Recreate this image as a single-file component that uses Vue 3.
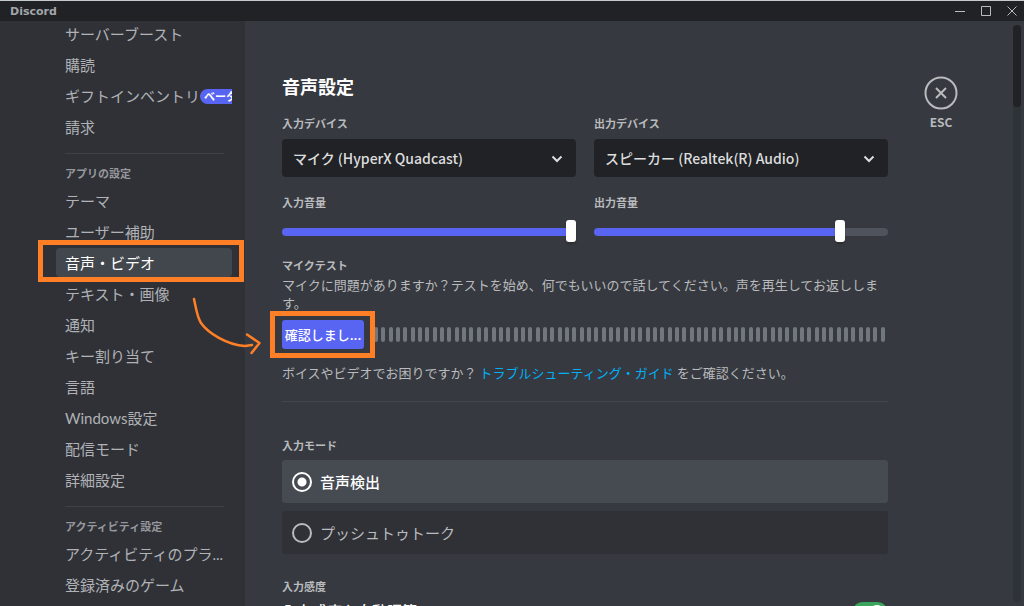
<script setup>
import { ref, computed } from 'vue'

const topItems = [
  { label: 'サーバーブースト' },
  { label: '購読' },
  { label: 'ギフトインベントリ', badge: 'ベータ' },
  { label: '請求' },
]
const appItems = [
  'テーマ',
  'ユーザー補助',
  '音声・ビデオ',
  'テキスト・画像',
  '通知',
  'キー割り当て',
  '言語',
  'Windows設定',
  '配信モード',
  '詳細設定',
]
const activityItems = ['アクティビティのプラ...', '登録済みのゲーム']
const current = ref('音声・ビデオ')

const inputVolume = ref(100)
const outputVolume = ref(85)
const inputFill = computed(() => ({ '--fill': inputVolume.value + '%' }))
const outputFill = computed(() => ({ '--fill': outputVolume.value + '%' }))
const mode = ref('voice')
const auto = ref(true)
</script>

<template>
  <div class="window">
    <header class="titlebar">
      <span class="brand">Discord</span>
      <div class="controls">
        <button type="button" aria-label="最小化">
          <svg width="12" height="12" viewBox="0 0 12 12"><path d="M1 6.5h10" /></svg>
        </button>
        <button type="button" aria-label="最大化">
          <svg width="12" height="12" viewBox="0 0 12 12"><path d="M1.5 1.5h9v9h-9z" /></svg>
        </button>
        <button type="button" aria-label="ウィンドウを閉じる">
          <svg width="12" height="12" viewBox="0 0 12 12"><path d="M1.5 1.5l9 9M10.5 1.5l-9 9" /></svg>
        </button>
      </div>
    </header>

    <div class="body">
      <nav class="sidebar">
        <ul class="first">
          <li v-for="item in topItems" :key="item.label">
            <a href="#" class="item" @click.prevent>
              {{ item.label }}<span v-if="item.badge" class="badge">{{ item.badge }}</span>
            </a>
          </li>
        </ul>
        <hr />
        <h2>アプリの設定</h2>
        <ul>
          <li v-for="item in appItems" :key="item">
            <a
              href="#"
              class="item"
              :class="{ active: item === current }"
              @click.prevent="current = item"
            >{{ item }}</a>
            <span v-if="item === '音声・ビデオ'" class="mark mark-item"></span>
          </li>
        </ul>
        <hr />
        <h2>アクティビティ設定</h2>
        <ul>
          <li v-for="item in activityItems" :key="item">
            <a href="#" class="item" @click.prevent>{{ item }}</a>
          </li>
        </ul>
      </nav>

      <main class="main">
        <section class="content">
          <h1>音声設定</h1>
          <div class="grid">
            <div class="field">
              <label class="label" for="in-device">入力デバイス</label>
              <div class="select">
                <select id="in-device">
                  <option>マイク (HyperX Quadcast)</option>
                </select>
                <svg width="12" height="8" viewBox="0 0 12 8"><path d="M1.5 1.5L6 6l4.5-4.5" /></svg>
              </div>
            </div>
            <div class="field">
              <label class="label" for="out-device">出力デバイス</label>
              <div class="select">
                <select id="out-device">
                  <option>スピーカー (Realtek(R) Audio)</option>
                </select>
                <svg width="12" height="8" viewBox="0 0 12 8"><path d="M1.5 1.5L6 6l4.5-4.5" /></svg>
              </div>
            </div>
            <div class="field">
              <label class="label" for="in-vol">入力音量</label>
              <input id="in-vol" v-model="inputVolume" type="range" min="0" max="100" :style="inputFill" />
            </div>
            <div class="field">
              <label class="label" for="out-vol">出力音量</label>
              <input id="out-vol" v-model="outputVolume" type="range" min="0" max="100" :style="outputFill" />
            </div>
          </div>

          <h3 class="label test-label">マイクテスト</h3>
          <p class="desc">マイクに問題がありますか？テストを始め、何でもいいので話してください。声を再生してお返しします。</p>
          <div class="test">
            <button type="button" class="check">確認しまし...</button>
            <div class="meter"><i v-for="n in 70" :key="n"></i></div>
            <span class="mark mark-button"></span>
            <svg class="arrow" width="70" height="62" viewBox="0 0 70 62">
              <path d="M3 3C5 12 6 21 10 27C17 37 36 49 54 50L61 49" />
              <path d="M56 38.5L68.5 47L60.5 57" />
            </svg>
          </div>
          <p class="help">
            ボイスやビデオでお困りですか？ <a href="#" @click.prevent>トラブルシューティング・ガイド</a> をご確認ください。
          </p>

          <fieldset class="modes">
            <legend class="label">入力モード</legend>
            <label class="mode" :class="{ on: mode === 'voice' }">
              <input v-model="mode" type="radio" name="mode" value="voice" />
              <span>音声検出</span>
            </label>
            <label class="mode" :class="{ on: mode === 'ptt' }">
              <input v-model="mode" type="radio" name="mode" value="ptt" />
              <span>プッシュトゥトーク</span>
            </label>
          </fieldset>

          <h3 class="label">入力感度</h3>
          <label class="auto">
            <span>入力感度を自動調節</span>
            <input v-model="auto" type="checkbox" role="switch" />
          </label>
        </section>

        <aside class="tools">
          <button type="button" class="close">
            <svg width="34" height="34" viewBox="0 0 34 34">
              <circle cx="17" cy="17" r="15.5" />
              <path d="M12 12l10 10M22 12L12 22" />
            </svg>
            <span>ESC</span>
          </button>
        </aside>
        <div class="scroll"><div class="thumb"></div></div>
      </main>
    </div>
  </div>
</template>

<style>
html,
body {
  margin: 0;
  background: #36393f;
  overflow: hidden;
}
</style>

<style scoped>
* {
  box-sizing: border-box;
}
.window {
  display: flex;
  flex-direction: column;
  height: 100vh;
  overflow: hidden;
  color: #b9bbbe;
  background: #36393f;
  font-family: 'Noto Sans CJK JP', sans-serif;
}
button {
  padding: 0;
  border: 0;
  background: none;
  color: inherit;
  font: inherit;
}
h1,
h2,
h3,
p,
ul,
fieldset {
  margin: 0;
  padding: 0;
  border: 0;
  list-style: none;
}
.titlebar {
  flex: none;
  display: flex;
  align-items: center;
  justify-content: space-between;
  height: 21px;
  padding: 0 6px 0 10px;
  border-top: 1px solid #c5cacd;
  background: #202225;
}
.brand {
  padding-top: 2px;
  font: bold 11px/18px 'DejaVu Sans', sans-serif;
  color: #a3a6aa;
}
.controls {
  display: flex;
  gap: 14px;
}
.controls button {
  display: flex;
}
.controls svg {
  fill: none;
  stroke: #b9bbbe;
}
.body {
  flex: 1;
  display: flex;
  min-height: 0;
}
.sidebar {
  flex: none;
  width: 245px;
  padding: 0 13px 0 56px;
  background: #2f3136;
}
.sidebar ul {
  display: flex;
  flex-direction: column;
  gap: 2px;
}
.sidebar .first {
  margin-top: -2px;
}
.sidebar li {
  position: relative;
}
.item {
  display: flex;
  align-items: center;
  height: 29px;
  padding-left: 9px;
  border-radius: 4px;
  overflow: hidden;
  white-space: nowrap;
  color: #b0b2b6;
  font-family: Lato, 'Noto Sans CJK JP', sans-serif;
  font-size: 15px;
  line-height: 20px;
  text-decoration: none;
}
.item.active {
  background: #42464d;
  color: #fff;
}
.badge {
  flex: none;
  height: 15px;
  margin-top: 2px;
  padding: 0 4px;
  border-radius: 8px;
  background: #5865f2;
  color: #fff;
  font-size: 11px;
  font-weight: 700;
  line-height: 15px;
}
.sidebar hr {
  height: 1px;
  margin: 12px 8px 11px 9px;
  border: 0;
  background: #3f4147;
}
.sidebar h2 {
  padding-left: 9px;
  color: #96989d;
  font-size: 11px;
  font-weight: 700;
  line-height: 16px;
  margin-bottom: 5px;
}
.mark {
  position: absolute;
  border: 5px solid #ff7f27;
  pointer-events: none;
}
.mark-item {
  inset: -8px -12px -5px -18px;
}
.mark-button {
  width: 105px;
  height: 47px;
  left: -12px;
  top: -9px;
}
.main {
  position: relative;
  flex: 1;
  display: flex;
  min-width: 0;
  padding: 0 3px 0 37px;
}
.content {
  flex: 1;
  min-width: 0;
  max-width: 740px;
  padding-top: 53px;
}
h1 {
  color: #fff;
  font-size: 18px;
  font-weight: 700;
  line-height: 24px;
}
.label {
  display: block;
  padding: 0;
  color: #b9bbbe;
  font-size: 11px;
  font-weight: 700;
  line-height: 16px;
}
.grid {
  display: grid;
  grid-template-columns: 1fr 1fr;
  gap: 17px 18px;
  margin-top: 17px;
}
.select {
  position: relative;
  margin-top: 8px;
}
.select select {
  display: block;
  width: 100%;
  height: 38px;
  padding: 0 32px 0 11px;
  border: 0;
  border-radius: 4px;
  appearance: none;
  background: #202225;
  color: #dcddde;
  font: 500 14px 'Noto Sans CJK JP', sans-serif;
}
.select svg {
  position: absolute;
  right: 13px;
  top: 16px;
  fill: none;
  stroke: #dcddde;
  stroke-width: 2;
  pointer-events: none;
}
input[type='range'] {
  display: block;
  width: 100%;
  height: 22px;
  margin: 11px 0 0;
  appearance: none;
  background: none;
}
input[type='range']::-webkit-slider-runnable-track {
  height: 8px;
  border-radius: 4px;
  background: linear-gradient(to right, #5865f2 var(--fill), #4f545c var(--fill));
}
input[type='range']::-webkit-slider-thumb {
  appearance: none;
  width: 10px;
  height: 22px;
  margin-top: -8px;
  border-radius: 3px;
  background: #fff;
  box-shadow: 0 2px 2px rgba(0, 0, 0, 0.2);
}
.test-label {
  margin-top: 14px;
}
.desc,
.help {
  font-size: 13px;
  line-height: 18px;
}
.desc {
  margin-top: 3px;
}
.test {
  position: relative;
  display: flex;
  align-items: center;
  gap: 10px;
  margin-top: 8px;
  padding-right: 3px;
}
.check {
  flex: none;
  width: 82px;
  height: 29px;
  border-radius: 3px;
  background: #5865f2;
  color: #fff;
  font-size: 13px;
  font-weight: 500;
}
.meter {
  flex: 1;
  display: flex;
  justify-content: space-between;
}
.meter i {
  width: 4px;
  height: 15px;
  border-radius: 2px;
  background: #72767d;
}
.arrow {
  position: absolute;
  left: -91px;
  top: -24px;
  fill: none;
  stroke: #ff7f27;
  stroke-width: 2.5;
  stroke-linecap: round;
  stroke-linejoin: round;
}
.help {
  margin-top: 15px;
  padding-bottom: 19px;
  border-bottom: 1px solid #42454b;
}
.help a {
  color: #00aff4;
  text-decoration: none;
}
.modes {
  display: flex;
  flex-direction: column;
  gap: 8px;
  margin: 35px 0 24px;
}
.modes legend {
  margin-bottom: 7px;
}
.mode {
  display: flex;
  align-items: center;
  gap: 8px;
  height: 43px;
  padding: 0 10px;
  border-radius: 3px;
  background: #2f3136;
  font-size: 15px;
}
.mode.on {
  background: #464a51;
  color: #fff;
  font-weight: 500;
}
.mode input {
  width: 20px;
  height: 20px;
  margin: 0;
  border: 2px solid currentColor;
  border-radius: 50%;
  appearance: none;
  color: inherit;
}
.mode input:checked {
  background: radial-gradient(circle, #fff 4px, transparent 5px);
}
.auto {
  display: flex;
  align-items: flex-start;
  justify-content: space-between;
  margin-top: 8px;
  color: #fff;
  font-size: 15px;
  font-weight: 500;
  line-height: 18px;
}
.auto input {
  display: flex;
  width: 36px;
  height: 22px;
  margin: 0;
  padding: 3px;
  border-radius: 11px;
  justify-content: flex-end;
  appearance: none;
  background: #3ba55d;
}
.auto input::before {
  content: '';
  width: 16px;
  height: 16px;
  border-radius: 50%;
  background: #fff;
}
.tools {
  flex: none;
  padding: 55px 55px 0 36px;
}
.close {
  display: flex;
  flex-direction: column;
  align-items: center;
  font-size: 12px;
  font-weight: 700;
  line-height: 16px;
  gap: 4px;
}
.close svg {
  fill: none;
  stroke: #b9bbbe;
  stroke-width: 2;
}
.scroll {
  flex: none;
  width: 8px;
  margin: 4px 0;
  border-radius: 4px;
  background: #2e3338;
}
.thumb {
  height: 82px;
  border-radius: 4px;
  background: #202225;
}
</style>
